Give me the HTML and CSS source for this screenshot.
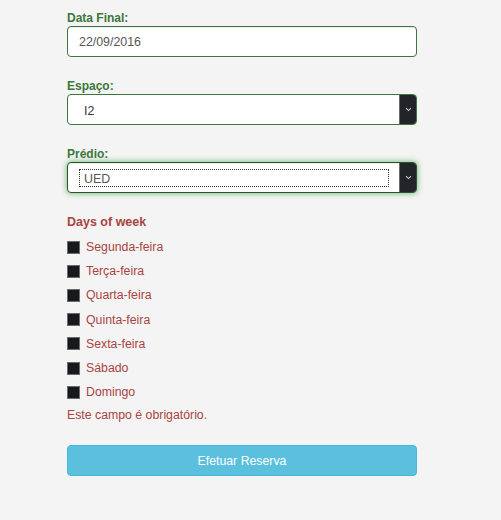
FILE: index.html
```html
<!DOCTYPE html>
<html lang="pt">
<head>
<meta charset="utf-8">
<title>Reserva</title>
<link rel="stylesheet" href="styles.css">
</head>
<body>
<form class="form">
  <div class="group">
    <label class="label ok">Data Final:</label>
    <div class="input">22/09/2016</div>
  </div>
  <div class="group">
    <label class="label ok">Espaço:</label>
    <div class="select">
      <span class="select-text">I2</span>
      <span class="arrow"><svg width="7" height="5" viewBox="0 0 7 5"><path d="M1 1.2 L3.5 3.6 L6 1.2" fill="none" stroke="#c9c9c9" stroke-width="1.1"/></svg></span>
    </div>
  </div>
  <div class="group">
    <label class="label ok">Prédio:</label>
    <div class="select focus">
      <span class="select-text dotted">UED</span>
      <span class="arrow"><svg width="7" height="5" viewBox="0 0 7 5"><path d="M1 1.2 L3.5 3.6 L6 1.2" fill="none" stroke="#c9c9c9" stroke-width="1.1"/></svg></span>
    </div>
  </div>
  <div class="days">
    <div class="label err days-title">Days of week</div>
    <div class="day"><span class="box"></span><span>Segunda-feira</span></div>
    <div class="day"><span class="box"></span><span>Terça-feira</span></div>
    <div class="day"><span class="box"></span><span>Quarta-feira</span></div>
    <div class="day"><span class="box"></span><span>Quinta-feira</span></div>
    <div class="day"><span class="box"></span><span>Sexta-feira</span></div>
    <div class="day"><span class="box"></span><span>Sábado</span></div>
    <div class="day"><span class="box"></span><span>Domingo</span></div>
    <div class="help">Este campo é obrigatório.</div>
  </div>
  <button type="button" class="btn">Efetuar Reserva</button>
</form>
</body>
</html>
```

FILE: styles.css
```css
html, body {
  margin: 0;
  padding: 0;
  background: #f4f4f4;
  font-family: "Liberation Sans", Arial, sans-serif;
  font-size: 12.3px;
  color: #333;
}
.form {
  width: 350px;
  margin-left: 67px;
  padding-top: 10px;
  display: flex;
  flex-direction: column;
}
.group {
  display: flex;
  flex-direction: column;
  margin-bottom: 21px;
}
.label {
  display: block;
  font-weight: bold;
  font-size: 12px;
  line-height: 16px;
  height: 16px;
}
.ok { color: #3c763d; }
.err { color: #a94442; }
.input {
  box-sizing: border-box;
  height: 31px;
  border: 1px solid #3c763d;
  border-radius: 4px;
  background: #fff;
  padding: 0 11px;
  display: flex;
  align-items: center;
  color: #555;
  font-size: 12.4px;
  box-shadow: inset 0 1px 1px rgba(0,0,0,0.075);
}
.select {
  box-sizing: border-box;
  height: 31px;
  border: 1px solid #3c763d;
  border-radius: 4px;
  background: #fff;
  display: flex;
  align-items: stretch;
  overflow: hidden;
}
.select.focus {
  border-color: #2b542c;
  box-shadow: inset 0 1px 1px rgba(0,0,0,0.075), 0 0 6px #67b168;
}
.select-text {
  flex: 1;
  display: flex;
  align-items: center;
  padding-left: 16px;
  padding-top: 3px;
  color: #333;
  font-size: 12.4px;
}
.select-text.dotted {
  margin: 6px 10px 5px 11px;
  padding-left: 4px;
  padding-top: 2px;
  border: 1px dotted #333;
  color: #555;
}
.arrow {
  width: 16px;
  background: #232427;
  border-left: 1px solid #6a6a6a;
  display: flex;
  align-items: center;
  justify-content: center;
}
.days {
  display: flex;
  flex-direction: column;
}
.days-title {
  font-size: 12.5px;
  margin-bottom: 5px;
}
.day {
  height: 24.2px;
  display: flex;
  align-items: center;
  color: #a94442;
}
.box {
  box-sizing: border-box;
  width: 13px;
  height: 13px;
  background: #16191d;
  border: 1px solid #6b6b6b;
  margin-right: 6px;
}
.help {
  margin-top: 3px;
  line-height: 16px;
  color: #a94442;
}
.btn {
  margin-top: 22px;
  box-sizing: border-box;
  height: 31px;
  width: 350px;
  border: 1px solid #46b8da;
  border-radius: 4px;
  background: #5bc0de;
  color: #fff;
  font-family: "Liberation Sans", Arial, sans-serif;
  font-size: 12.3px;
  padding: 0;
}
```
